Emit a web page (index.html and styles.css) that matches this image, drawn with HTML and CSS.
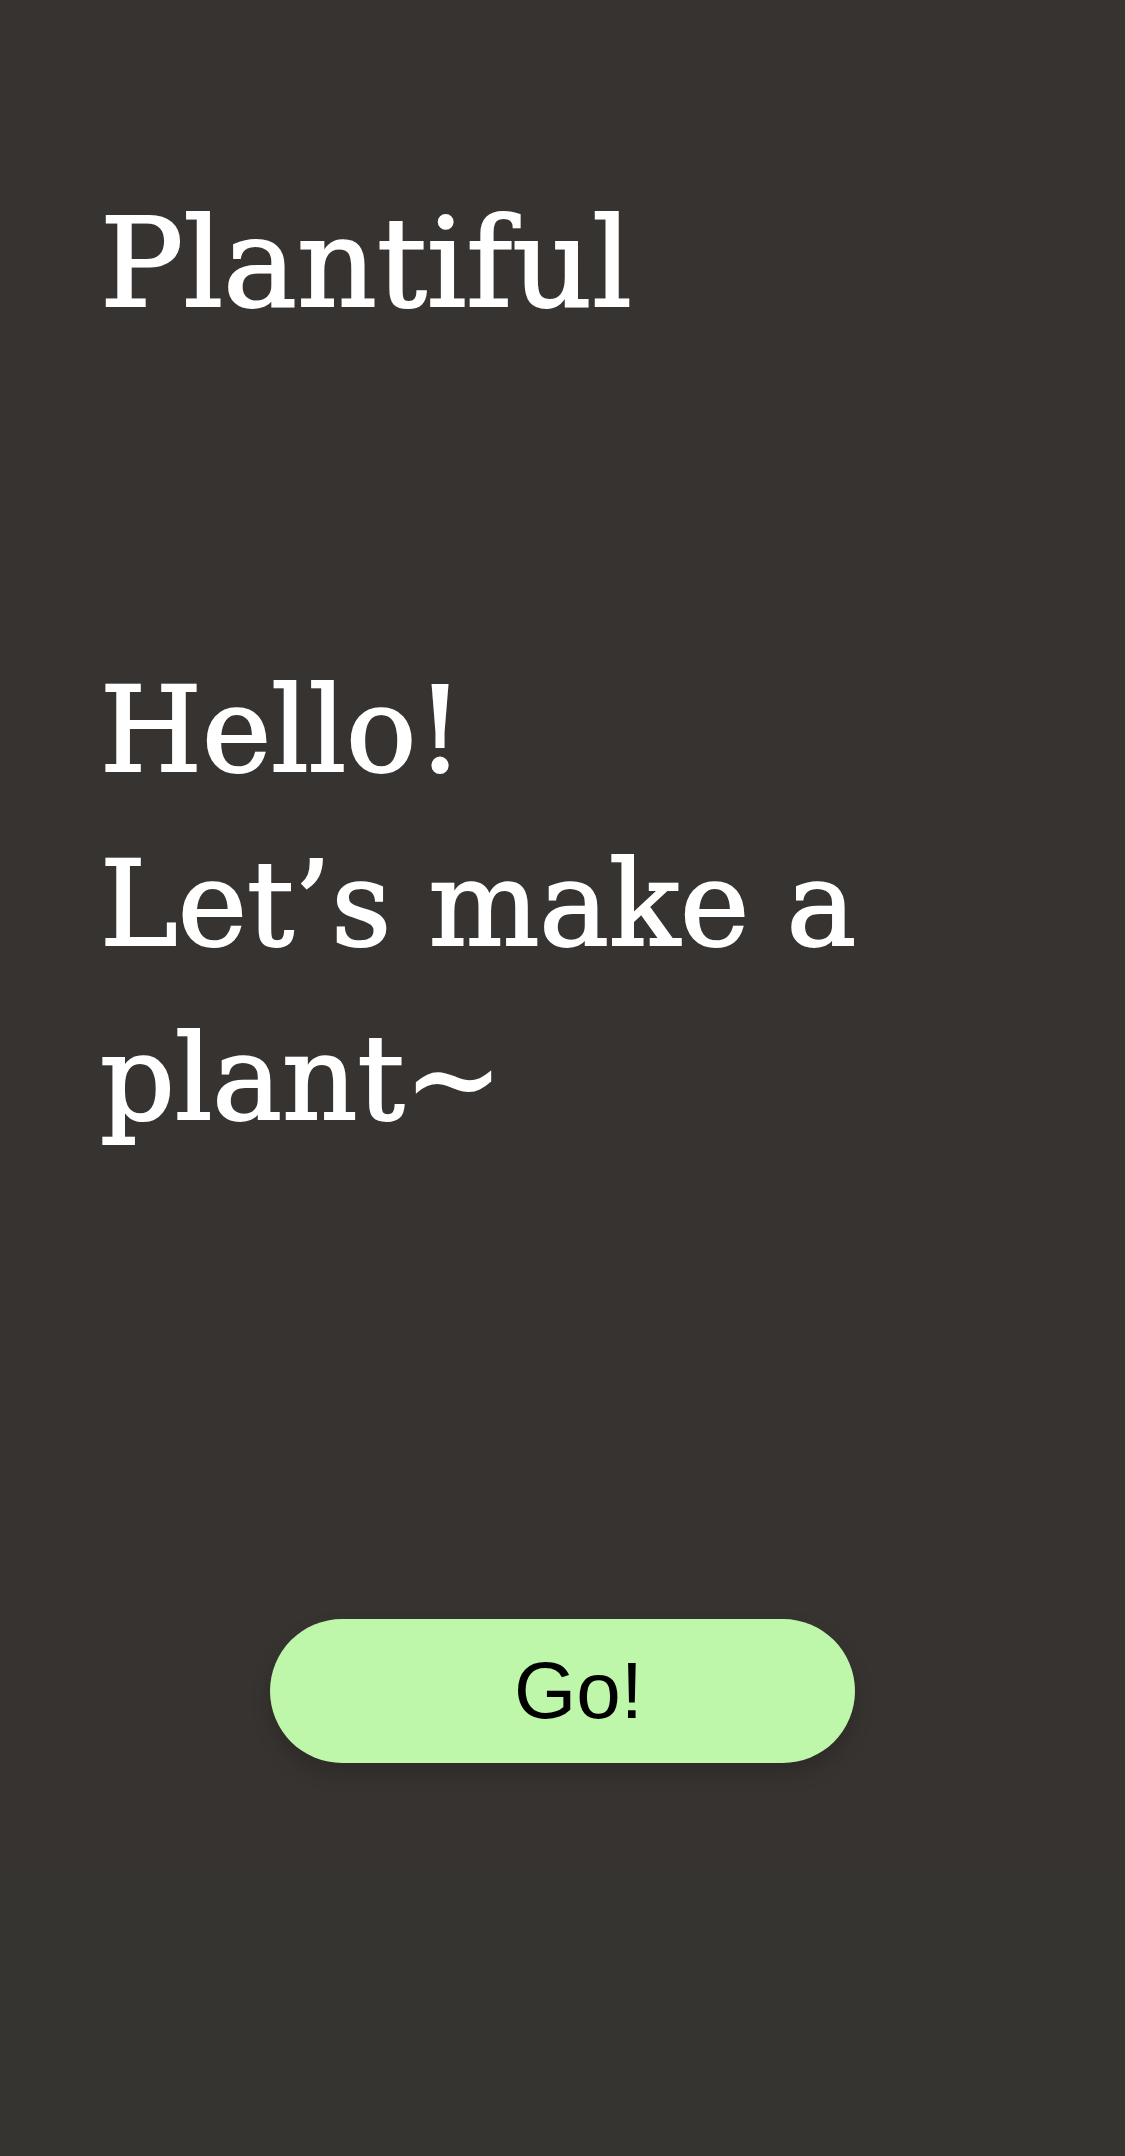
FILE: index.html
```html
<!DOCTYPE html>
<html lang="en">
<head>
<meta charset="utf-8">
<meta name="viewport" content="width=device-width, initial-scale=1">
<title>Plantiful</title>
<link rel="stylesheet" href="styles.css">
</head>
<body>
<main class="welcome">
  <h1 class="brand">Plantiful</h1>
  <p class="greeting">Hello!<br>Let’s make a<br>plant~</p>
  <button class="go" type="button">Go!</button>
</main>
</body>
</html>
```

FILE: styles.css
```css
body {
  margin: 0;
}

.welcome {
  box-sizing: border-box;
  display: flex;
  flex-direction: column;
  min-height: 100vh;
  padding: 176px 100px 100px;
  background: linear-gradient(#373330 80%, #363430 90%);
  color: #fff;
  font-family: "DejaVu Serif", serif;
  font-size: 117px;
  line-height: 174px;
}

.brand,
.greeting {
  margin: 0;
  font-weight: 400;
  -webkit-text-stroke: 2px currentColor;
}

.brand {
  font-size: 124px;
}

.greeting {
  margin-top: 294px;
}

.go {
  align-self: center;
  width: 585px;
  max-width: 100%;
  height: 144px;
  margin-top: 453px;
  padding: 0 0 0 32px;
  border: 0;
  border-radius: 72px;
  background: #bef6aa;
  box-shadow: 0 11px 20px rgb(0 0 0 / 18%);
  color: #000;
  font-family: "Liberation Sans", sans-serif;
  font-size: 80px;
}
```
